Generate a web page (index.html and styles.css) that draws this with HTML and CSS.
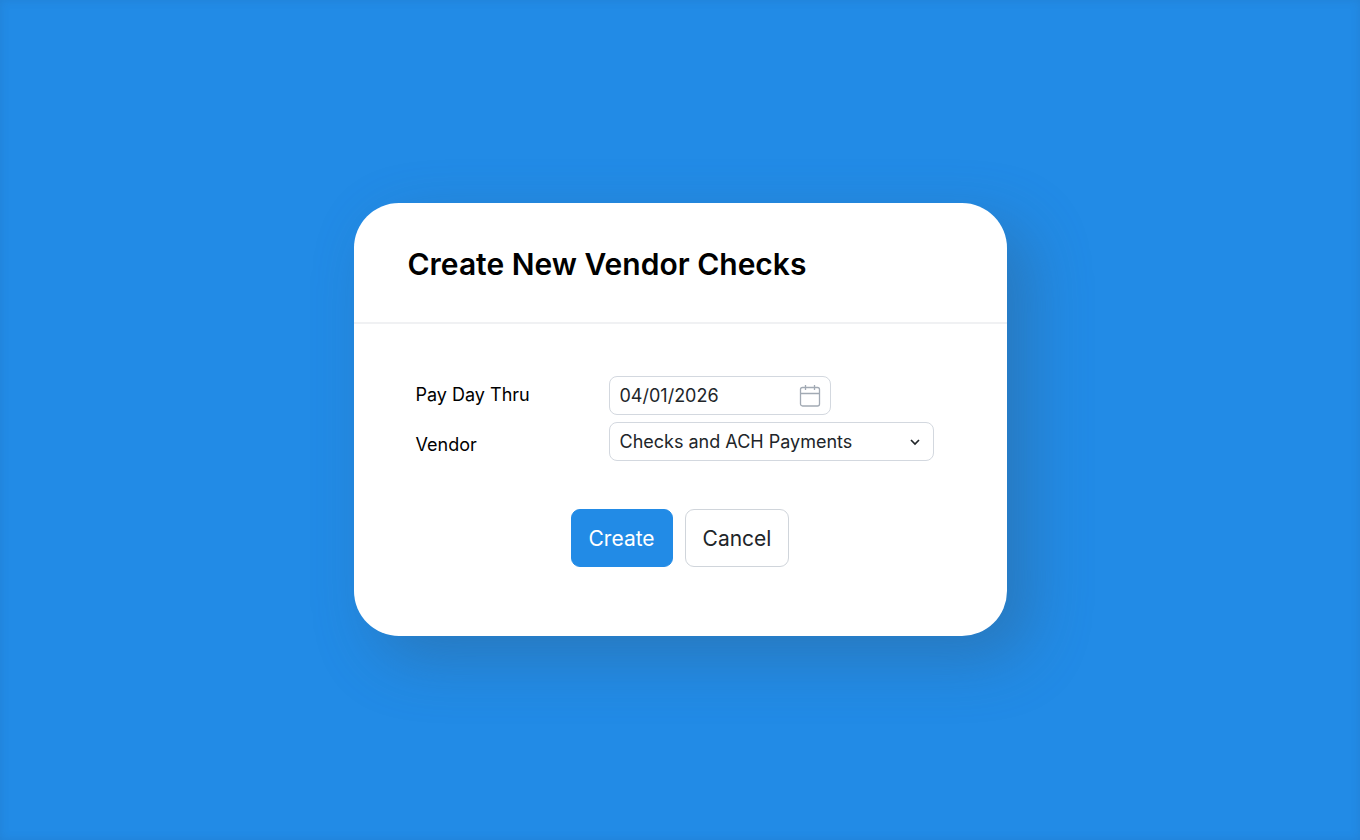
FILE: index.html
```html
<!DOCTYPE html>
<html lang="en">
<head>
  <meta charset="utf-8">
  <meta name="viewport" content="width=device-width, initial-scale=1">
  <title>Create New Vendor Checks</title>
  <link rel="stylesheet" href="styles.css">
</head>
<body>
  <main class="page">
    <form class="dialog">
      <header class="dialog-header">
        <h1 class="dialog-title">Create New Vendor Checks</h1>
      </header>
      <div class="dialog-body">
        <div class="fields">
          <div class="labels">
            <label class="label" for="pay-day">Pay Day Thru</label>
            <label class="label" for="vendor">Vendor</label>
          </div>
          <div class="controls">
            <div class="control control-date">
              <input class="input" id="pay-day" type="text" value="04/01/2026">
              <svg class="calendar" viewBox="0 0 22 24" aria-hidden="true">
                <rect x="1.5" y="3.5" width="19" height="18.5" rx="2"/>
                <path d="M1.5 9.5h19M6.5 1v5M15.5 1v5"/>
              </svg>
            </div>
            <div class="control">
              <select class="input" id="vendor">
                <option>Checks and ACH Payments</option>
              </select>
              <svg class="chevron" viewBox="0 0 10 8" aria-hidden="true">
                <path d="M1 2l4 4 4-4"/>
              </svg>
            </div>
          </div>
        </div>
        <div class="actions">
          <button class="button button-primary" type="submit">Create</button>
          <button class="button" type="button">Cancel</button>
        </div>
      </div>
    </form>
  </main>
</body>
</html>
```
FILE: styles.css
```css
* {
  box-sizing: border-box;
}

body {
  margin: 0;
  font-family: Inter, "Liberation Sans", sans-serif;
  color: #000;
}

.page {
  display: flex;
  align-items: center;
  justify-content: center;
  min-height: 100vh;
  padding: 24px 24px 26px;
  background: #228be6;
  box-shadow: inset 0 0 10px rgba(40, 80, 130, 0.16);
}

.dialog {
  width: 100%;
  max-width: 653px;
  border-radius: 45px;
  background: #fff;
  box-shadow: 22px 22px 60px rgba(48, 100, 145, 0.48);
}

.dialog-header {
  padding: 42px 54px 38px;
  border-bottom: 2px solid #f0f1f3;
}

.dialog-title {
  margin: 0;
  font-size: 30px;
  font-weight: 600;
  line-height: 39px;
}

.dialog-body {
  padding: 52px 62px 69px;
}

.fields {
  display: grid;
  grid-template-columns: 193px minmax(0, 325px);
}

.labels {
  display: flex;
  flex-direction: column;
  align-items: flex-start;
  gap: 28px;
  padding-top: 8px;
}

.label {
  font-size: 18px;
  line-height: 22px;
}

.controls {
  display: flex;
  flex-direction: column;
  gap: 7px;
}

.control {
  position: relative;
}

.control-date {
  max-width: 222px;
}

.input {
  display: block;
  width: 100%;
  height: 39px;
  padding: 0 40px 0 10px;
  border: 1px solid #d3d8df;
  border-radius: 8px;
  background: #fff;
  color: #212529;
  font: inherit;
  font-size: 18px;
  appearance: none;
}

.calendar,
.chevron {
  position: absolute;
  top: 2px;
  bottom: 0;
  margin: auto 0;
  fill: none;
  pointer-events: none;
}

.calendar {
  right: 10px;
  width: 22px;
  height: 24px;
  stroke: #a2aab4;
  stroke-width: 1.3;
}

.chevron {
  right: 14px;
  width: 10px;
  height: 8px;
  stroke: #212529;
  stroke-width: 1.7;
}

.actions {
  display: flex;
  justify-content: center;
  gap: 12px;
  margin-top: 48px;
}

.button {
  height: 58px;
  padding: 2px 17px 0;
  border: 1px solid #d0d5db;
  border-radius: 9px;
  background: #fff;
  color: #212529;
  font: inherit;
  font-size: 21px;
}

.button-primary {
  border-color: #228be6;
  background: #228be6;
  color: #fff;
}
```
